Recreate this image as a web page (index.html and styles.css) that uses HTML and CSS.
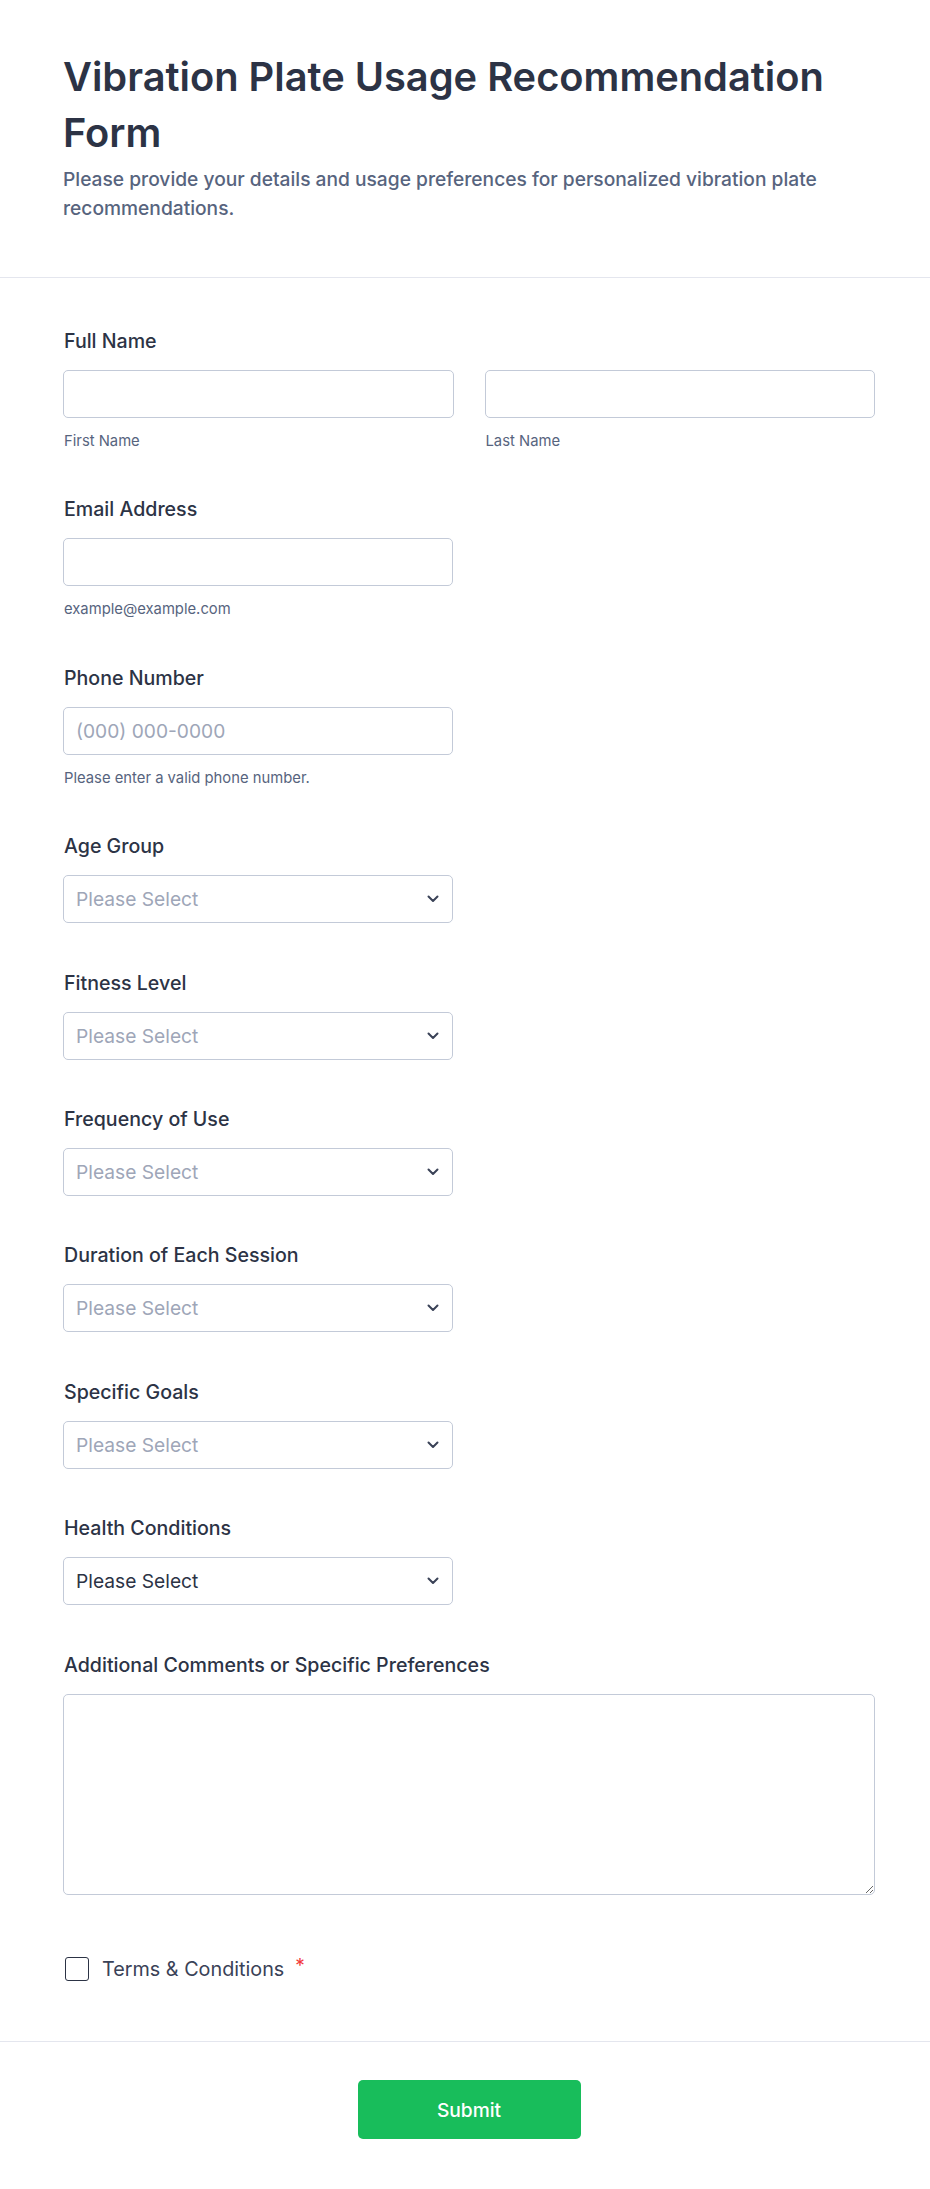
FILE: index.html
```html
<!doctype html>
<html lang="en">
<head>
    <meta charset="UTF-8">
    <meta name="viewport" content="width=device-width, initial-scale=1.0">
    <title>Vibration Plate Usage Recommendation Form</title>
    <link rel="stylesheet" href="styles.css">
</head>
<body>

<form class="form" onsubmit="return false;">
    <!--标题区域 start-->
    <header class="form-header">
        <h1 class="form-title">Vibration Plate Usage Recommendation Form</h1>
        <p class="form-subtitle">Please provide your details and usage preferences for personalized vibration plate recommendations.</p>
    </header>
    <!--标题区域 end-->

    <div class="form-body">
        <div class="field">
            <label class="field-label">Full Name</label>
            <div class="name-row">
                <div>
                    <input class="input" type="text">
                    <span class="sublabel">First Name</span>
                </div>
                <div>
                    <input class="input" type="text">
                    <span class="sublabel">Last Name</span>
                </div>
            </div>
        </div>

        <div class="field">
            <label class="field-label">Email Address</label>
            <input class="input input-short" type="email">
            <span class="sublabel">example@example.com</span>
        </div>

        <div class="field">
            <label class="field-label">Phone Number</label>
            <input class="input input-short" type="tel" placeholder="(000) 000-0000">
            <span class="sublabel">Please enter a valid phone number.</span>
        </div>

        <div class="field">
            <label class="field-label">Age Group</label>
            <div class="select-wrap">
                <select class="select"><option>Please Select</option></select>
                <svg class="chevron" width="12" height="8" viewBox="0 0 12 8"><polyline points="1.5,1.5 6,6 10.5,1.5"/></svg>
            </div>
        </div>

        <div class="field">
            <label class="field-label">Fitness Level</label>
            <div class="select-wrap">
                <select class="select"><option>Please Select</option></select>
                <svg class="chevron" width="12" height="8" viewBox="0 0 12 8"><polyline points="1.5,1.5 6,6 10.5,1.5"/></svg>
            </div>
        </div>

        <div class="field">
            <label class="field-label">Frequency of Use</label>
            <div class="select-wrap">
                <select class="select"><option>Please Select</option></select>
                <svg class="chevron" width="12" height="8" viewBox="0 0 12 8"><polyline points="1.5,1.5 6,6 10.5,1.5"/></svg>
            </div>
        </div>

        <div class="field">
            <label class="field-label">Duration of Each Session</label>
            <div class="select-wrap">
                <select class="select"><option>Please Select</option></select>
                <svg class="chevron" width="12" height="8" viewBox="0 0 12 8"><polyline points="1.5,1.5 6,6 10.5,1.5"/></svg>
            </div>
        </div>

        <div class="field">
            <label class="field-label">Specific Goals</label>
            <div class="select-wrap">
                <select class="select"><option>Please Select</option></select>
                <svg class="chevron" width="12" height="8" viewBox="0 0 12 8"><polyline points="1.5,1.5 6,6 10.5,1.5"/></svg>
            </div>
        </div>

        <div class="field">
            <label class="field-label">Health Conditions</label>
            <div class="select-wrap">
                <select class="select select-filled"><option>Please Select</option></select>
                <svg class="chevron" width="12" height="8" viewBox="0 0 12 8"><polyline points="1.5,1.5 6,6 10.5,1.5"/></svg>
            </div>
        </div>

        <div class="field">
            <label class="field-label">Additional Comments or Specific Preferences</label>
            <textarea class="textarea"></textarea>
        </div>

        <div class="terms-field">
            <label class="terms">
                <input class="checkbox" type="checkbox">
                <span class="terms-text">Terms &amp; Conditions</span>
                <span class="required">*</span>
            </label>
        </div>
    </div>

    <!--提交按钮-->
    <div class="form-footer">
        <button class="submit" type="submit">Submit</button>
    </div>
</form>

</body>
</html>
```

FILE: styles.css
```css
* {
    margin: 0;
    padding: 0;
    box-sizing: border-box;
}

html, body {
    background: #fff;
}

body {
    font-family: Inter, "Noto Sans", "Liberation Sans", sans-serif;
    color: #2c3345;
}

.form-header {
    padding: 49px 55px 54px 63px;
    border-bottom: 1px solid #e4e6ee;
}

.form-title {
    font-size: 39.8px;
    line-height: 56px;
    font-weight: 600;
    color: #2c3345;
}

.form-subtitle {
    margin-top: 4px;
    font-size: 19.2px;
    line-height: 29px;
    font-weight: 500;
    color: #57647e;
}

.form-body {
    padding: 51px 55px 60px 63px;
}

.field {
    margin-bottom: 47.4px;
}

.field-label {
    display: block;
    font-size: 19.6px;
    line-height: 24px;
    font-weight: 500;
    color: #2c3345;
    margin-bottom: 17px;
    padding-left: 1px;
}

.name-row {
    display: grid;
    grid-template-columns: 1fr 1fr;
    column-gap: 31px;
}

.input,
.select,
.textarea {
    display: block;
    width: 100%;
    border: 1px solid #c3cad8;
    border-radius: 5px;
    background: #fff;
    font-family: inherit;
    font-size: 19.2px;
    color: #2c3345;
    outline: none;
}

.input {
    height: 48px;
    padding: 0 12px;
}

.input::placeholder {
    color: #9ea6b8;
}

.input-short {
    width: 48%;
}

.sublabel {
    display: block;
    margin-top: 15px;
    font-size: 14.8px;
    line-height: 17px;
    color: #57647e;
    padding-left: 1px;
}

.select-wrap {
    position: relative;
    width: 48%;
}

.select {
    height: 48px;
    padding: 0 36px 0 12px;
    appearance: none;
    -webkit-appearance: none;
    color: #9ea6b8;
}

.select-filled {
    color: #2c3345;
}

.chevron {
    position: absolute;
    right: 14px;
    top: 50%;
    margin-top: -4px;
    fill: none;
    stroke: #3a4257;
    stroke-width: 2;
    stroke-linecap: round;
    stroke-linejoin: round;
    pointer-events: none;
}

.textarea {
    height: 201px;
    padding: 12px;
    resize: both;
}

.terms-field {
    padding-top: 15.5px;
}

.terms {
    display: flex;
    align-items: center;
    cursor: pointer;
}

.checkbox {
    appearance: none;
    -webkit-appearance: none;
    width: 24px;
    height: 24px;
    border: 1.5px solid #2c3345;
    border-radius: 3px;
    background: #fff;
    margin-left: 2px;
    flex-shrink: 0;
}

.terms-text {
    margin-left: 13px;
    font-size: 19.8px;
    line-height: 24px;
    color: #3a4257;
}

.required {
    margin-left: 11px;
    font-size: 19px;
    line-height: 24px;
    color: #f23a3c;
    align-self: flex-start;
    margin-top: -3px;
}

.form-footer {
    border-top: 1px solid #e4e6ee;
    padding: 38px 55px 50px 63px;
    text-align: center;
}

.submit {
    width: 223px;
    height: 59px;
    border: none;
    border-radius: 5px;
    background: #18bd5b;
    color: #fff;
    font-family: inherit;
    font-size: 19.2px;
    font-weight: 500;
    cursor: pointer;
}
```
